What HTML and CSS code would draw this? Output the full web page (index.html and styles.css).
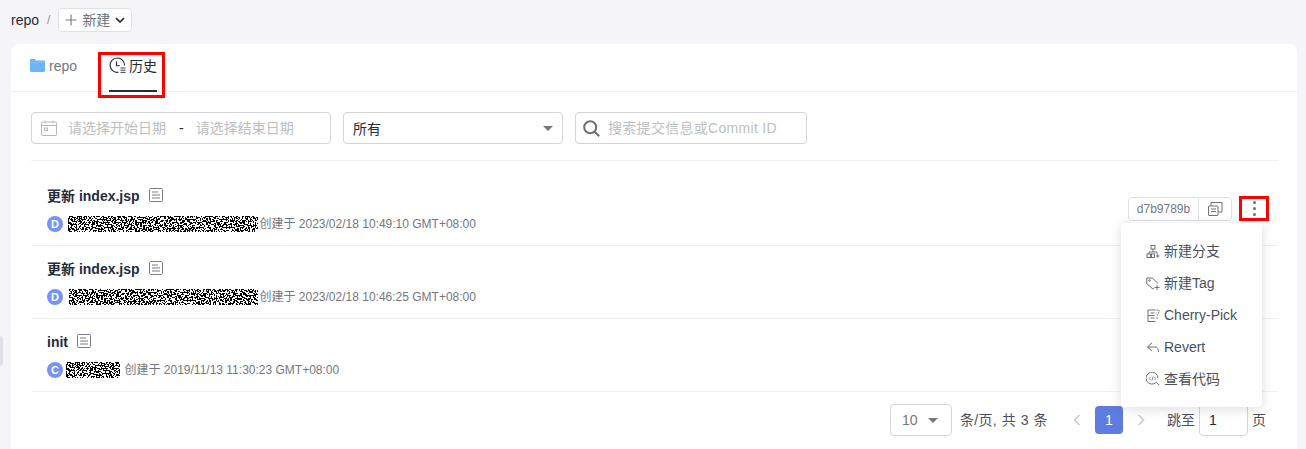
FILE: index.html
```html
<!DOCTYPE html>
<html lang="zh">
<head>
<meta charset="utf-8">
<title>repo 历史</title>
<link rel="stylesheet" href="styles.css">
</head>
<body>
<svg class="defs" width="0" height="0" aria-hidden="true">
  <filter id="noise" x="0" y="0" width="100%" height="100%" color-interpolation-filters="sRGB">
    <feTurbulence type="fractalNoise" baseFrequency="0.62" numOctaves="1" seed="7"/>
    <feColorMatrix values="0 0 0 0 0  0 0 0 0 0  0 0 0 0 0  1.6 0 0 0 -0.3"/>
    <feComponentTransfer><feFuncA type="discrete" tableValues="0 1"/></feComponentTransfer>
  </filter>
</svg>
<div class="side-tab"></div>
<header class="crumbs">
  <span class="crumb">repo</span>
  <span class="sep">/</span>
  <button class="new-btn">
    <svg width="12" height="12" viewBox="0 0 12 12"><path d="M6 .5v11M.5 6h11" stroke="#7b7f8b" stroke-width="1.2" fill="none"/></svg>
    <span>新建</span>
    <svg width="10" height="7" viewBox="0 0 10 7"><path d="M1 1l4 4 4-4" stroke="#252b3a" stroke-width="1.7" fill="none"/></svg>
  </button>
</header>
<main class="card">
  <nav class="tabs">
    <a class="tab">
      <svg width="15" height="13" viewBox="0 0 15 13"><path d="M0 1.2C0 .5.5 0 1.2 0h3.6l1.4 1.6h7.6c.7 0 1.2.5 1.2 1.2v9c0 .7-.5 1.2-1.2 1.2H1.2C.5 13 0 12.500 0 11.800z" fill="#6cb4f8"/><path d="M0 3.200h15" stroke="#8ec6fa" stroke-width=".8"/></svg>
      <span>repo</span>
    </a>
    <a class="tab active">
      <svg width="17" height="17" viewBox="0 0 17 17" fill="none" stroke="#252b3a" stroke-width="1.1"><path d="M9.500 15.300A7.200 7.200 0 1 1 15.500 8.500"/><path d="M7.500 4.500v4.300h3.300"/><path d="M11.500 11h5M11.500 13.200h5M11.500 15.400h5" stroke-width=".9"/></svg>
      <span>历史</span>
      <i class="mark"></i>
    </a>
  </nav>
  <section class="filters">
    <div class="field date">
      <svg width="16" height="16" viewBox="0 0 16 16" fill="none" stroke="#b5b7bd"><rect x=".5" y="2" width="15" height="13.500" rx="1"/><path d="M.5 5.500h15M4 .5v3M12 .5v3"/><rect x="3.500" y="8" width="3" height="2.500"/></svg>
      <span class="ph">请选择开始日期</span>
      <span class="dash">-</span>
      <span class="ph">请选择结束日期</span>
    </div>
    <div class="field select">
      <span>所有</span>
      <i class="caret"></i>
    </div>
    <div class="field search">
      <svg width="17" height="17" viewBox="0 0 17 17" fill="none" stroke="#6e7079" stroke-width="2"><circle cx="7.200" cy="7.200" r="6"/><path d="M11.500 11.500l4.700 4.700"/></svg>
      <span class="ph">搜索提交信息或Commit ID</span>
    </div>
  </section>
  <section class="list">
    <article class="row">
      <div class="info">
        <div class="title"><strong>更新 index.jsp</strong>
          <svg class="note" width="14" height="14" viewBox="0 0 14 14" fill="none" stroke="#7b7f8b"><rect x=".5" y=".5" width="13" height="13" rx="1"/><path d="M3 4h6M3 7h8M3 10h8"/></svg>
        </div>
        <div class="meta"><span class="avatar">D</span><svg class="redact wide" viewBox="0 0 190 16"><rect width="190" height="16" fill="#fff"/><rect width="190" height="16" filter="url(#noise)"/></svg><span>创建于 2023/02/18 10:49:10 GMT+08:00</span></div>
      </div>
      <div class="actions">
        <div class="hash">
          <span class="sha">d7b9789b</span>
          <span class="copy"><svg width="15" height="14" viewBox="0 0 15 14" fill="none" stroke="#6e7079"><rect x=".5" y="4" width="9.500" height="9.500" rx=".5"/><path d="M3 4V.5h11v9.500h-4"/><path d="M3 7h5M3 9.500h5"/></svg></span>
        </div>
        <button class="more">
          <i></i><i></i><i></i>
          <ul class="menu">
            <li><svg width="13" height="13" viewBox="0 0 13 13" fill="none" stroke="#6e7079"><rect x="4.500" y=".5" width="4" height="3.500"/><path d="M6.500 4v3M2.500 9V7h8v2"/><rect x=".5" y="9" width="3.500" height="3.500"/><rect x="5" y="9" width="3" height="3.500"/><path d="M9.500 11h3.500M11.200 9.200v3.500"/></svg><span>新建分支</span></li>
            <li><svg width="14" height="13" viewBox="0 0 14 13" fill="none" stroke="#6e7079"><path d="M8 11L6.800 12 .8 6.500V1h5.400l6 5.500"/><circle cx="3.500" cy="3.500" r=".8"/><path d="M8.500 10.500h5M11 8v5"/></svg><span>新建Tag</span></li>
            <li><svg width="13" height="13" viewBox="0 0 13 13" fill="none" stroke="#6e7079"><path d="M9 1H1.500v11.500H9"/><path d="M1.500 6.500H8M4 4h4M4 9h4"/><path d="M10 1h2.500v3H10M10 6h2.500M10 9h2.500" stroke-dasharray="1.500 1"/></svg><span>Cherry-Pick</span></li>
            <li><svg width="13" height="13" viewBox="0 0 13 13" fill="none" stroke="#6e7079"><path d="M5.500 2L1 6l4.500 4"/><path d="M1 6h7.500c2.500 0 3.500 2 3.500 5"/></svg><span>Revert</span></li>
            <li><svg width="14" height="14" viewBox="0 0 14 14" fill="none" stroke="#6e7079"><path d="M10.300 10.300a6 6 0 1 1 1.700-4.300"/><path d="M10.300 10.300L13 13"/><path d="M4.800 4.800L3.200 6.500l1.600 1.700M8.200 4.800l1.600 1.700-1.600 1.700M7 4.500L6 8.500" stroke-width=".8"/></svg><span>查看代码</span></li>
          </ul>
        </button>
      </div>
    </article>
    <article class="row">
      <div class="info">
        <div class="title"><strong>更新 index.jsp</strong>
          <svg class="note" width="14" height="14" viewBox="0 0 14 14" fill="none" stroke="#7b7f8b"><rect x=".5" y=".5" width="13" height="13" rx="1"/><path d="M3 4h6M3 7h8M3 10h8"/></svg>
        </div>
        <div class="meta"><span class="avatar">D</span><svg class="redact wide2" viewBox="0 0 189 16"><rect width="189" height="16" fill="#fff"/><g transform="translate(-40 0)"><rect x="40" width="189" height="16" filter="url(#noise)"/></g></svg><span>创建于 2023/02/18 10:46:25 GMT+08:00</span></div>
      </div>
    </article>
    <article class="row">
      <div class="info">
        <div class="title"><strong>init</strong>
          <svg class="note" width="14" height="14" viewBox="0 0 14 14" fill="none" stroke="#7b7f8b"><rect x=".5" y=".5" width="13" height="13" rx="1"/><path d="M3 4h6M3 7h8M3 10h8"/></svg>
        </div>
        <div class="meta"><span class="avatar">C</span><svg class="redact short" viewBox="0 0 54 16"><rect width="54" height="16" fill="#fff"/><rect width="54" height="16" filter="url(#noise)"/></svg><span class="after-short">创建于 2019/11/13 11:30:23 GMT+08:00</span></div>
      </div>
    </article>
  </section>
  <footer class="pager">
    <div class="size"><span>10</span><i class="caret"></i></div>
    <span class="total">条/页, 共 3 条</span>
    <svg class="prev" width="8" height="12" viewBox="0 0 8 12" fill="none" stroke="#c6c8cd" stroke-width="1.500"><path d="M6.500 1L1.500 6l5 5"/></svg>
    <span class="page">1</span>
    <svg class="next" width="8" height="12" viewBox="0 0 8 12" fill="none" stroke="#c6c8cd" stroke-width="1.500"><path d="M1.500 1l5 5-5 5"/></svg>
    <span class="jump">跳至</span>
    <span class="goto">1</span>
    <span class="unit">页</span>
  </footer>
</main>
</body>
</html>
```
FILE: styles.css
```css
* { box-sizing: border-box; }
html, body { height: 100%; overflow: hidden; }
body {
  margin: 0;
  padding: 8px 9px 0 11px;
  background: #f5f5f7;
  color: #252b3a;
  font: 14px/20px "Liberation Sans", "Noto Sans CJK SC", sans-serif;
}
ul { margin: 0; padding: 0; list-style: none; }
button { font: inherit; }
.defs { position: absolute; }
.side-tab {
  position: absolute;
  left: 0;
  top: 336px;
  width: 3px;
  height: 30px;
  background: #dfe0e3;
  border-radius: 0 3px 3px 0;
}
.crumbs { display: flex; align-items: center; height: 24px; }
.crumb { color: #252b3a; }
.sep { margin: 0 8px; color: #8a8e99; font-size: 12px; }
.new-btn {
  display: flex;
  align-items: center;
  gap: 5px;
  height: 24px;
  width: 74px;
  padding: 0 6px;
  background: #fff;
  border: 1px solid #dfe1e6;
  border-radius: 4px;
  color: #6e7079;
}
.card {
  margin-top: 12px;
  height: 405px;
  background: #fff;
  border-radius: 8px 8px 0 0;
}
.tabs {
  display: flex;
  gap: 32px;
  height: 48px;
  padding-left: 19px;
  border-bottom: 1px solid #f0f0f2;
}
.tab {
  position: relative;
  display: flex;
  align-items: center;
  gap: 4px;
  height: 48px;
  padding-bottom: 5px;
  color: #75777f;
}
.tab.active {
  gap: 3px;
  color: #252b3a;
  border-bottom: 2px solid #252b3a;
  padding-bottom: 3px;
}
.mark {
  position: absolute;
  left: -11px;
  right: -8px;
  top: 8px;
  bottom: -8px;
  border: 3px solid #f00;
}
.filters {
  display: flex;
  gap: 12px;
  margin: 20px 19px 0 20px;
  padding-bottom: 16px;
  border-bottom: 1px solid #eeeff1;
}
.field {
  display: flex;
  align-items: center;
  height: 32px;
  background: #fff;
  border: 1px solid #d4d5d9;
  border-radius: 4px;
}
.ph { color: #bdbec2; }
.date { width: 300px; padding-left: 9px; }
.date svg { margin-right: 11px; }
.dash { margin: 0 12px 0 13px; color: #252b3a; }
.select { width: 220px; padding: 2px 9px 0 9px; justify-content: space-between; }
.select .caret { margin-top: -2px; }
.caret {
  width: 0;
  height: 0;
  border: 5px solid transparent;
  border-top: 5px solid #75777f;
  border-bottom: 0;
}
.search { width: 232px; padding-left: 7px; gap: 8px; }
.search .ph { letter-spacing: .3px; }
.list { margin: 0 19px 0 20px; padding-top: 12px; }
.row {
  display: flex;
  justify-content: space-between;
  align-items: center;
  height: 73px;
  padding: 0 9px 1px 16px;
  border-bottom: 1px solid #f0f0f2;
}
.info { display: flex; flex-direction: column; gap: 10px; }
.title { display: flex; align-items: center; gap: 9px; height: 20px; }
.title strong { color: #252b3a; }
.note { margin-top: -1px; }
.meta { display: flex; align-items: center; height: 16px; font-size: 12px; line-height: 16px; color: #75777f; }
.avatar {
  flex: none;
  width: 16px;
  height: 16px;
  border-radius: 50%;
  background: #7693f5;
  color: #fff;
  font-weight: 700;
  font-size: 11px;
  text-align: center;
}
.redact { display: block; flex: none; height: 16px; }
.wide { width: 190px; margin: 0 1.500px 0 5px; }
.wide2 { width: 189px; margin: 0 1.500px 0 6px; }
.short { width: 54px; margin: 0 4.500px 0 3px; }
.actions { display: flex; align-items: center; gap: 7px; }
.hash {
  display: flex;
  height: 24px;
  border: 1px solid #dfe1e6;
  border-radius: 4px;
  font-size: 12px;
  line-height: 22px;
  color: #75777f;
}
.sha { width: 70px; text-align: center; border-right: 1px solid #dfe1e6; }
.copy { width: 32px; display: flex; align-items: center; justify-content: center; }
.more {
  position: relative;
  display: flex;
  flex-direction: column;
  align-items: center;
  justify-content: center;
  gap: 3px;
  width: 30px;
  height: 25px;
  padding: 0 0 0 1px;
  background: none;
  border: 3px solid #f00;
}
.more > i { width: 3px; height: 3px; background: #6e7079; border-radius: 50%; }
.menu {
  position: absolute;
  z-index: 2;
  top: 24px;
  right: 4px;
  width: 141px;
  height: 184px;
  padding: 12px 0;
  background: #fff;
  border-radius: 4px;
  box-shadow: 0 2px 12px rgba(37, 43, 58, .16);
  color: #4c505b;
  text-align: left;
}
.menu li { display: flex; align-items: center; height: 32px; padding-left: 25px; gap: 4px; }
.menu svg { flex: none; width: 14px; }
.pager {
  display: flex;
  align-items: center;
  justify-content: flex-end;
  margin: 12px 31px 0 0;
  height: 32px;
  color: #4c505b;
}
.size {
  display: flex;
  align-items: center;
  justify-content: space-between;
  width: 62px;
  height: 32px;
  padding: 0 13px 0 11px;
  border: 1px solid #d4d5d9;
  border-radius: 4px;
  color: #75777f;
}
.total { margin: 0 25px 0 8px; width: 88px; white-space: nowrap; letter-spacing: .3px; word-spacing: .5px; }
.prev { margin-right: 14px; }
.page {
  width: 28px;
  height: 28px;
  line-height: 28px;
  text-align: center;
  background: #5e7ce0;
  border-radius: 4px;
  color: #fff;
}
.next { margin: 0 22px 0 14px; }
.jump { width: 28px; margin-right: 4px; }
.goto {
  width: 49px;
  height: 32px;
  line-height: 30px;
  padding-left: 9px;
  border: 1px solid #d4d5d9;
  border-radius: 4px;
  color: #252b3a;
}
.unit { margin-left: 4px; }
```
